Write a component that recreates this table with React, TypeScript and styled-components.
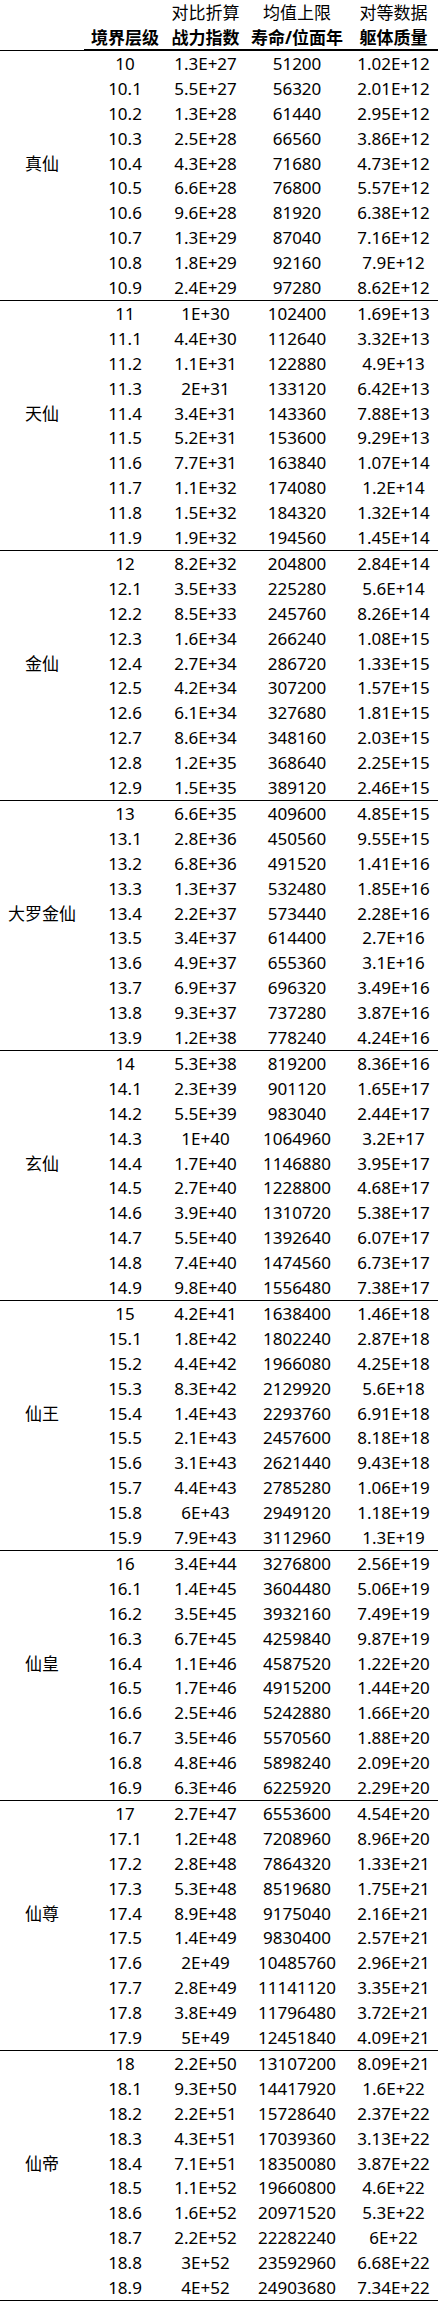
import React from "react";
import styled, { createGlobalStyle } from "styled-components";

const GlobalStyle = createGlobalStyle`
  html, body {
    margin: 0;
    padding: 0;
    background: #ffffff;
  }
  body {
    font-family: "Noto Sans", "Noto Sans CJK SC", sans-serif;
    color: #000000;
  }
`;

const COLS = "84px 82px 79px 104px 89px";

const Sheet = styled.div`
  width: 438px;
  display: flex;
  flex-direction: column;
  font-size: 17px;
  line-height: 1;
  border-bottom: 1px solid #000;
`;

const Header = styled.div`
  display: grid;
  grid-template-columns: ${COLS};
  grid-template-rows: 25px 25px;
`;

const HeadCell = styled.div<{ $bold?: boolean; $rule?: boolean }>`
  display: flex;
  align-items: center;
  justify-content: center;
  white-space: nowrap;
  font-weight: ${(p) => (p.$bold ? 700 : 400)};
  border-bottom: ${(p) => (p.$rule ? "1px solid #000" : "none")};
`;

const Group = styled.section`
  display: grid;
  grid-template-columns: ${COLS};
  grid-template-rows: repeat(10, 1fr);
  height: 250px;
  box-sizing: border-box;
  border-top: 1px solid #000;
`;

const Cell = styled.div`
  display: flex;
  align-items: center;
  justify-content: center;
  white-space: nowrap;
`;

const Label = styled(Cell)`
  letter-spacing: 0;
`;

type Row = [string, string, string, string];

const groups: { name: string; rows: Row[] }[] = [
  {
    name: "真仙",
    rows: [
      ["10", "1.3E+27", "51200", "1.02E+12"],
      ["10.1", "5.5E+27", "56320", "2.01E+12"],
      ["10.2", "1.3E+28", "61440", "2.95E+12"],
      ["10.3", "2.5E+28", "66560", "3.86E+12"],
      ["10.4", "4.3E+28", "71680", "4.73E+12"],
      ["10.5", "6.6E+28", "76800", "5.57E+12"],
      ["10.6", "9.6E+28", "81920", "6.38E+12"],
      ["10.7", "1.3E+29", "87040", "7.16E+12"],
      ["10.8", "1.8E+29", "92160", "7.9E+12"],
      ["10.9", "2.4E+29", "97280", "8.62E+12"],
    ],
  },
  {
    name: "天仙",
    rows: [
      ["11", "1E+30", "102400", "1.69E+13"],
      ["11.1", "4.4E+30", "112640", "3.32E+13"],
      ["11.2", "1.1E+31", "122880", "4.9E+13"],
      ["11.3", "2E+31", "133120", "6.42E+13"],
      ["11.4", "3.4E+31", "143360", "7.88E+13"],
      ["11.5", "5.2E+31", "153600", "9.29E+13"],
      ["11.6", "7.7E+31", "163840", "1.07E+14"],
      ["11.7", "1.1E+32", "174080", "1.2E+14"],
      ["11.8", "1.5E+32", "184320", "1.32E+14"],
      ["11.9", "1.9E+32", "194560", "1.45E+14"],
    ],
  },
  {
    name: "金仙",
    rows: [
      ["12", "8.2E+32", "204800", "2.84E+14"],
      ["12.1", "3.5E+33", "225280", "5.6E+14"],
      ["12.2", "8.5E+33", "245760", "8.26E+14"],
      ["12.3", "1.6E+34", "266240", "1.08E+15"],
      ["12.4", "2.7E+34", "286720", "1.33E+15"],
      ["12.5", "4.2E+34", "307200", "1.57E+15"],
      ["12.6", "6.1E+34", "327680", "1.81E+15"],
      ["12.7", "8.6E+34", "348160", "2.03E+15"],
      ["12.8", "1.2E+35", "368640", "2.25E+15"],
      ["12.9", "1.5E+35", "389120", "2.46E+15"],
    ],
  },
  {
    name: "大罗金仙",
    rows: [
      ["13", "6.6E+35", "409600", "4.85E+15"],
      ["13.1", "2.8E+36", "450560", "9.55E+15"],
      ["13.2", "6.8E+36", "491520", "1.41E+16"],
      ["13.3", "1.3E+37", "532480", "1.85E+16"],
      ["13.4", "2.2E+37", "573440", "2.28E+16"],
      ["13.5", "3.4E+37", "614400", "2.7E+16"],
      ["13.6", "4.9E+37", "655360", "3.1E+16"],
      ["13.7", "6.9E+37", "696320", "3.49E+16"],
      ["13.8", "9.3E+37", "737280", "3.87E+16"],
      ["13.9", "1.2E+38", "778240", "4.24E+16"],
    ],
  },
  {
    name: "玄仙",
    rows: [
      ["14", "5.3E+38", "819200", "8.36E+16"],
      ["14.1", "2.3E+39", "901120", "1.65E+17"],
      ["14.2", "5.5E+39", "983040", "2.44E+17"],
      ["14.3", "1E+40", "1064960", "3.2E+17"],
      ["14.4", "1.7E+40", "1146880", "3.95E+17"],
      ["14.5", "2.7E+40", "1228800", "4.68E+17"],
      ["14.6", "3.9E+40", "1310720", "5.38E+17"],
      ["14.7", "5.5E+40", "1392640", "6.07E+17"],
      ["14.8", "7.4E+40", "1474560", "6.73E+17"],
      ["14.9", "9.8E+40", "1556480", "7.38E+17"],
    ],
  },
  {
    name: "仙王",
    rows: [
      ["15", "4.2E+41", "1638400", "1.46E+18"],
      ["15.1", "1.8E+42", "1802240", "2.87E+18"],
      ["15.2", "4.4E+42", "1966080", "4.25E+18"],
      ["15.3", "8.3E+42", "2129920", "5.6E+18"],
      ["15.4", "1.4E+43", "2293760", "6.91E+18"],
      ["15.5", "2.1E+43", "2457600", "8.18E+18"],
      ["15.6", "3.1E+43", "2621440", "9.43E+18"],
      ["15.7", "4.4E+43", "2785280", "1.06E+19"],
      ["15.8", "6E+43", "2949120", "1.18E+19"],
      ["15.9", "7.9E+43", "3112960", "1.3E+19"],
    ],
  },
  {
    name: "仙皇",
    rows: [
      ["16", "3.4E+44", "3276800", "2.56E+19"],
      ["16.1", "1.4E+45", "3604480", "5.06E+19"],
      ["16.2", "3.5E+45", "3932160", "7.49E+19"],
      ["16.3", "6.7E+45", "4259840", "9.87E+19"],
      ["16.4", "1.1E+46", "4587520", "1.22E+20"],
      ["16.5", "1.7E+46", "4915200", "1.44E+20"],
      ["16.6", "2.5E+46", "5242880", "1.66E+20"],
      ["16.7", "3.5E+46", "5570560", "1.88E+20"],
      ["16.8", "4.8E+46", "5898240", "2.09E+20"],
      ["16.9", "6.3E+46", "6225920", "2.29E+20"],
    ],
  },
  {
    name: "仙尊",
    rows: [
      ["17", "2.7E+47", "6553600", "4.54E+20"],
      ["17.1", "1.2E+48", "7208960", "8.96E+20"],
      ["17.2", "2.8E+48", "7864320", "1.33E+21"],
      ["17.3", "5.3E+48", "8519680", "1.75E+21"],
      ["17.4", "8.9E+48", "9175040", "2.16E+21"],
      ["17.5", "1.4E+49", "9830400", "2.57E+21"],
      ["17.6", "2E+49", "10485760", "2.96E+21"],
      ["17.7", "2.8E+49", "11141120", "3.35E+21"],
      ["17.8", "3.8E+49", "11796480", "3.72E+21"],
      ["17.9", "5E+49", "12451840", "4.09E+21"],
    ],
  },
  {
    name: "仙帝",
    rows: [
      ["18", "2.2E+50", "13107200", "8.09E+21"],
      ["18.1", "9.3E+50", "14417920", "1.6E+22"],
      ["18.2", "2.2E+51", "15728640", "2.37E+22"],
      ["18.3", "4.3E+51", "17039360", "3.13E+22"],
      ["18.4", "7.1E+51", "18350080", "3.87E+22"],
      ["18.5", "1.1E+52", "19660800", "4.6E+22"],
      ["18.6", "1.6E+52", "20971520", "5.3E+22"],
      ["18.7", "2.2E+52", "22282240", "6E+22"],
      ["18.8", "3E+52", "23592960", "6.68E+22"],
      ["18.9", "4E+52", "24903680", "7.34E+22"],
    ],
  },
];

export default function App() {
  return (
    <>
      <GlobalStyle />
      <Sheet>
        <Header>
          <HeadCell />
          <HeadCell />
          <HeadCell>对比折算</HeadCell>
          <HeadCell>均值上限</HeadCell>
          <HeadCell>对等数据</HeadCell>
          <HeadCell />
          <HeadCell $bold $rule>境界层级</HeadCell>
          <HeadCell $bold $rule>战力指数</HeadCell>
          <HeadCell $bold $rule>寿命/位面年</HeadCell>
          <HeadCell $bold $rule>躯体质量</HeadCell>
        </Header>
        {groups.map((g) => (
          <Group key={g.name}>
            {g.rows.map((r, i) => (
              <React.Fragment key={r[0]}>
                <Label>{i === 4 ? g.name : ""}</Label>
                <Cell>{r[0]}</Cell>
                <Cell>{r[1]}</Cell>
                <Cell>{r[2]}</Cell>
                <Cell>{r[3]}</Cell>
              </React.Fragment>
            ))}
          </Group>
        ))}
      </Sheet>
    </>
  );
}
